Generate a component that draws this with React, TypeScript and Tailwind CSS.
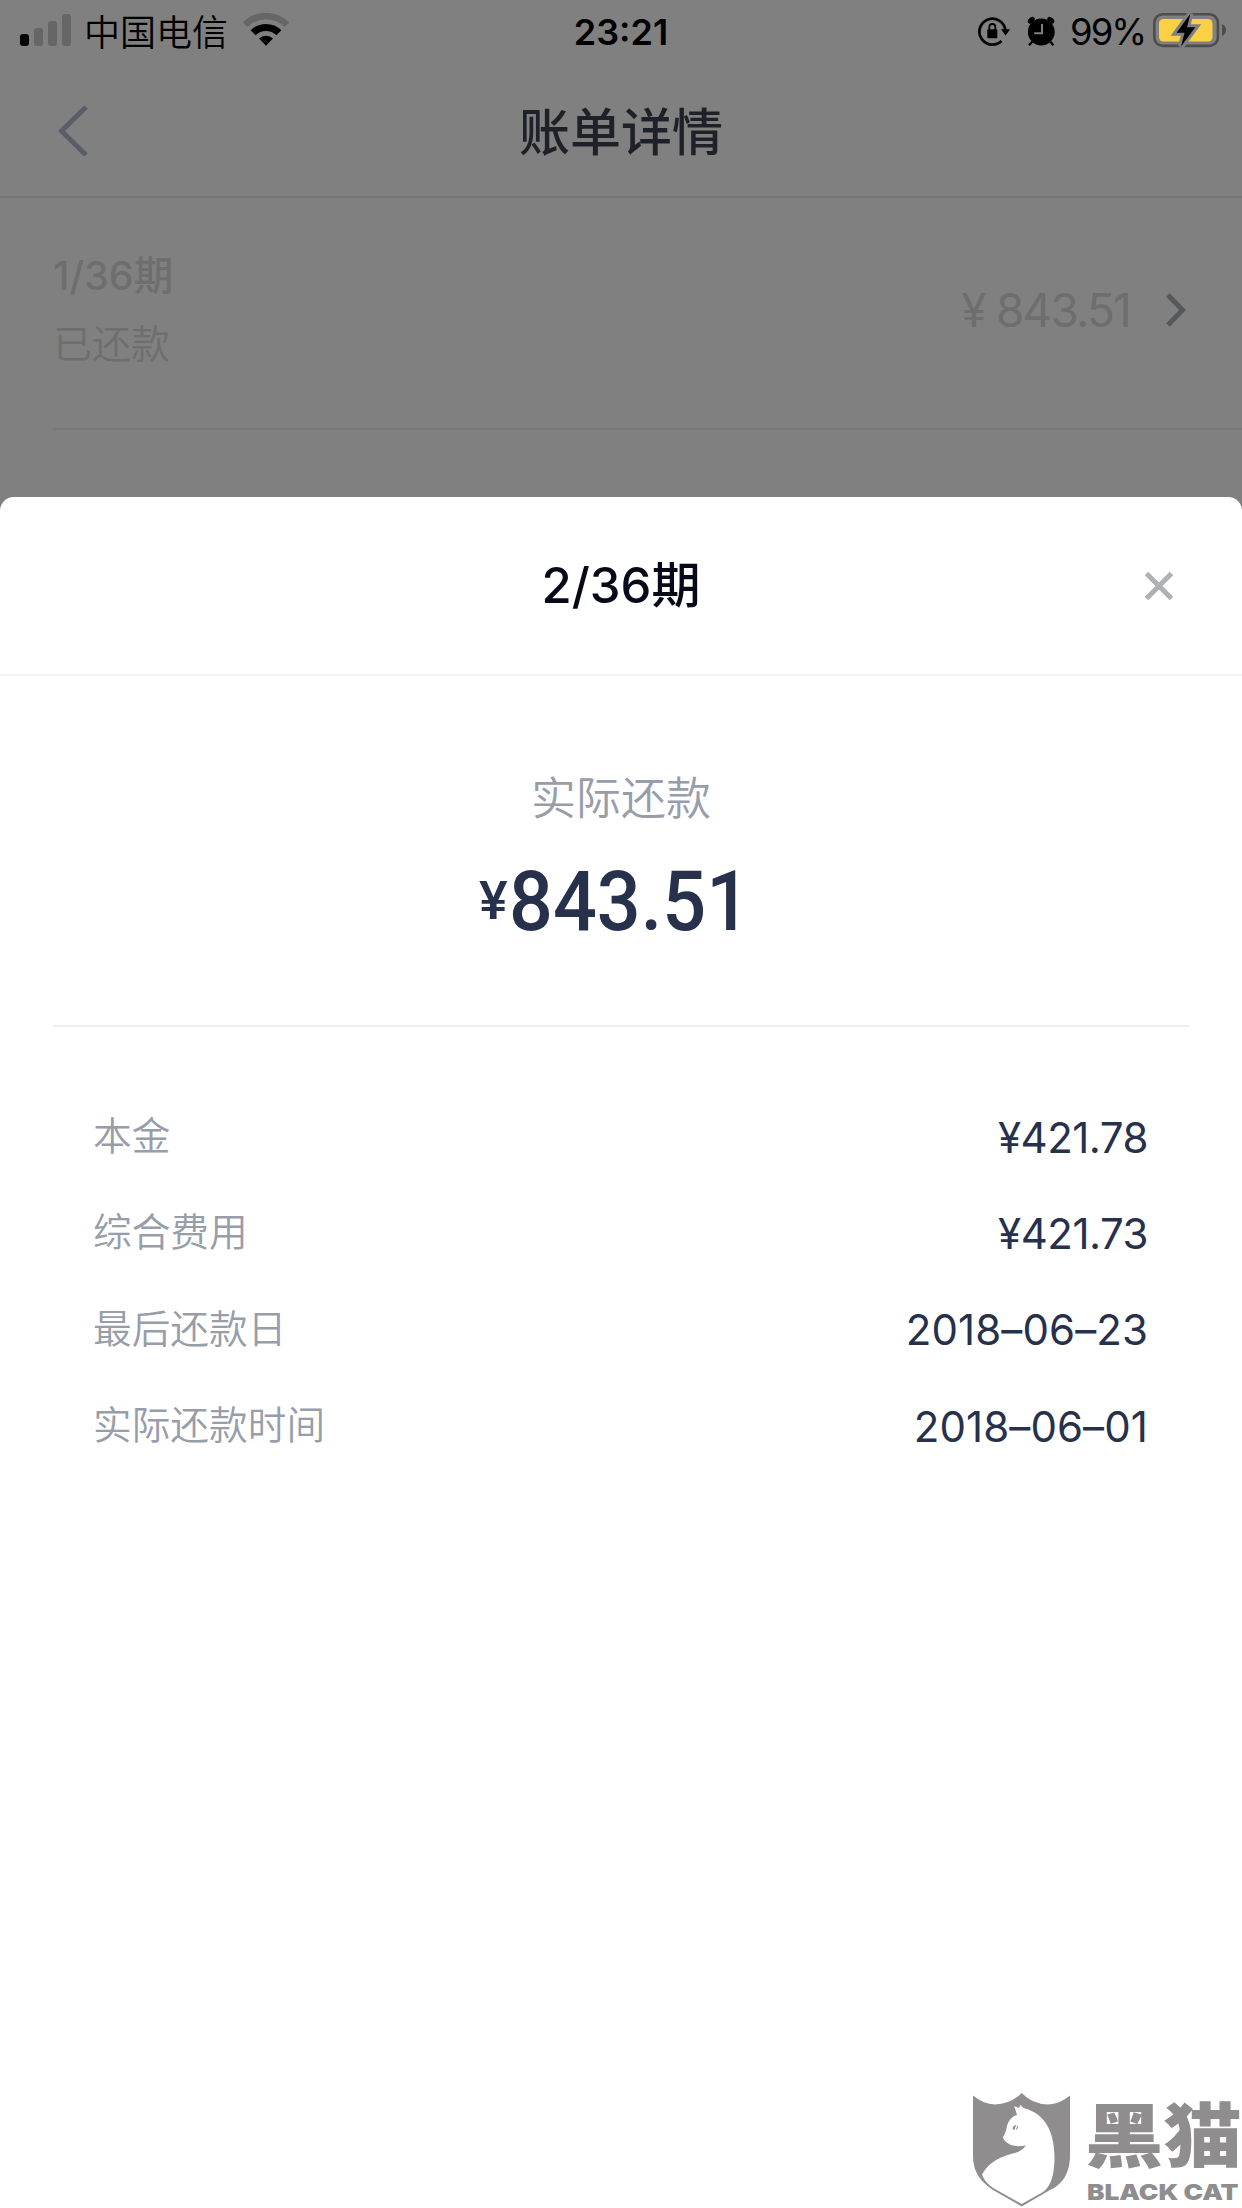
import React from "react";

const details = [
  { label: "本金", value: "¥421.78", tracking: "tracking-[-0.5px]" },
  { label: "综合费用", value: "¥421.73", tracking: "tracking-[-0.5px]" },
  { label: "最后还款日", value: "2018–06–23", tracking: "tracking-[0.1px]" },
  { label: "实际还款时间", value: "2018–06–01", tracking: "tracking-[0.1px]" },
];

function StatusBar() {
  return (
    <div className="h-[60px] flex items-center justify-between text-black relative">
      <div className="flex items-center pl-5">
        <svg width="52" height="32" viewBox="0 0 52 32" className="shrink-0">
          <rect x="0" y="20" width="9" height="12" rx="3" fill="#000" />
          <rect x="14" y="14" width="9" height="18" rx="3" fill="#666" />
          <rect x="28" y="7" width="9" height="25" rx="3" fill="#666" />
          <rect x="42" y="0" width="9" height="32" rx="3" fill="#666" />
        </svg>
        <span className="ml-3 pt-1.5 text-[36px] leading-[60px] font-[350]">中国电信</span>
        <svg width="46" height="34" viewBox="0 0 46 34" className="ml-[15px] shrink-0">
          <path d="M2.1 11.8 A29.5 29.5 0 0 1 43.9 11.8" fill="none" stroke="#666" strokeWidth="6.5" />
          <path d="M10.1 19.8 A18.2 18.2 0 0 1 35.9 19.8" fill="none" stroke="#000" strokeWidth="7" />
          <path d="M16 25.6 A10 10 0 0 1 30 25.6 L23 32.7 Z" fill="#000" />
        </svg>
      </div>
      <div className="absolute inset-x-0 pt-[3px] text-center text-[36px] font-semibold leading-[60px]">
        23:21
      </div>
      <div className="flex items-center pr-[15px]">
        <svg width="34" height="32" viewBox="0 0 34 32" className="mt-1">
          <path d="M24.5 25 A13 13 0 1 1 28.3 14" fill="none" stroke="#000" strokeWidth="2.8" />
          <path d="M24 13.3 H33.2 L28.5 19.5 Z" fill="#000" />
          <rect x="10.3" y="13.3" width="10" height="9" rx="1" fill="#000" />
          <path d="M12.3 14 V11 A3 3 0 0 1 18.3 11 V14" fill="none" stroke="#000" strokeWidth="1.8" />
        </svg>
        <svg width="28" height="31" viewBox="0 0 28 31" className="ml-4 mt-0.5">
          <circle cx="14.3" cy="16" r="13.4" fill="#000" />
          <ellipse cx="4.2" cy="4.2" rx="4" ry="2.6" transform="rotate(-42 4.2 4.2)" fill="#000" />
          <ellipse cx="23.8" cy="4.2" rx="4" ry="2.6" transform="rotate(42 23.8 4.2)" fill="#000" />
          <path d="M5.5 25.5 L2 29.3 M23 25.5 L26.5 29.3" stroke="#000" strokeWidth="2.4" />
          <path d="M15 8 V17.3 H7.3" stroke="#808080" strokeWidth="2" fill="none" />
        </svg>
        <span className="ml-[15px] w-[75px] pt-[3px] text-[36.5px] leading-[60px] tracking-[-2px] whitespace-nowrap">
          99%
        </span>
        <svg width="74" height="36" viewBox="0 0 74 36" className="ml-2">
          <rect x="1.3" y="2.3" width="63.6" height="31.6" rx="8.5" fill="none" stroke="#4d4d4d" strokeWidth="2.6" />
          <rect x="6" y="7" width="53.5" height="22.5" rx="4.5" fill="#fbd045" />
          <path d="M69 12 Q73 14 73 18 Q73 22 69 24 Z" fill="#4d4d4d" />
          <path
            d="M37.5 1.5 L23.5 20.8 H31.5 L28 34.5 L42.3 15.2 H34 Z"
            fill="#000"
            stroke="#808080"
            strokeWidth="6"
            paintOrder="stroke"
          />
        </svg>
      </div>
    </div>
  );
}

function Watermark() {
  return (
    <div className="absolute left-[973px] bottom-0 h-[115px] flex text-[#8f8d8e]">
      <svg width="98" height="114" viewBox="0 0 98 114" className="shrink-0">
        <path
          d="M0 2.5 Q10 11 22 11.5 Q38 11 48.7 0 Q59 11 75 11.5 Q87 11 97 2.5 V62 C97 82 88 92 77 97 L48.7 113.5 L20 97 C9 89 0 81 0 62 Z"
          fill="#8f8d8e"
        />
        <path
          d="M44 22 L41.3 13 L46 15 L47.5 12 L50.5 15 C74 21 81.5 42 81.5 64 C81.5 84 77 94 70 99 L48.7 111 L22 96 C15 92 11 87 9 81.5 C20 63 37 62 45 59 Q50 57 53 52.5 Q44 54 38 52 C34 50 30 47 30 44 C34 38 33 34 35.5 29 Q39 23 44 22 Z"
          fill="#fff"
        />
        <path d="M39.5 36 Q40 32 43 32 L41.5 37 Z M43 37 L44.5 32 Q46 36 43 37 Z" fill="#8f8d8e" />
      </svg>
      <div className="ml-[14px] w-[155px] pt-1.5 flex flex-col">
        <span className="origin-left scale-x-[1.12] text-[70px] leading-[76px] font-black whitespace-nowrap">黑猫</span>
        <span className="ml-0.5 mt-1 origin-left scale-x-[1.19] text-[22px] leading-[26px] font-black whitespace-nowrap">
          BLACK CAT
        </span>
      </div>
    </div>
  );
}

export default function App() {
  return (
    <div className="relative w-[1242px] h-[2208px] overflow-hidden bg-[#808080] font-['Inter','Noto_Sans_CJK_SC',sans-serif]">
      <StatusBar />

      {/* Page header */}
      <header className="h-[138px] relative flex items-center border-b-2 border-[#757575] px-[58px] pt-1.5">
        <svg width="30" height="50" viewBox="0 0 30 50">
          <path d="M28 1 L3.5 25 L28 49" fill="none" stroke="#595d68" strokeWidth="5" />
        </svg>
        <h1 className="absolute inset-x-0 pt-1 text-center text-[51px] font-medium text-[#1f2129]">账单详情</h1>
      </header>

      {/* Instalment behind the sheet */}
      <section className="h-[232px] ml-[53px] pr-[56px] pb-[6px] flex items-center justify-between border-b-2 border-[#797979] text-[#6e6e6e]">
        <div>
          <p className="text-[39.5px] leading-[68px] font-medium">1/36期</p>
          <p className="text-[39px] leading-[68px] font-[350]">已还款</p>
        </div>
        <div className="flex items-center">
          <span className="text-[46px] tracking-[-1.8px]">¥ 843.51</span>
          <svg width="20" height="34" viewBox="0 0 20 34" className="ml-[36px]">
            <path d="M2 2 L16.5 17 L2 32" fill="none" stroke="#56585b" strokeWidth="5" />
          </svg>
        </div>
      </section>

      {/* Bottom sheet */}
      <section className="mt-[67px] h-[1711px] rounded-t-[14px] bg-white">
        <div className="h-[179px] relative flex items-center justify-end pr-[68px] border-b-2 border-[#f3f3f4]">
          <h2 className="absolute inset-x-0 text-center text-[49px] font-medium text-[#060a18]">2/36期</h2>
          <svg width="30" height="30" viewBox="0 0 30 30">
            <path d="M2.5 2.5 L27.5 27.5 M27.5 2.5 L2.5 27.5" stroke="#afb1b5" strokeWidth="5" />
          </svg>
        </div>

        <div className="mx-[53px] h-[351px] pt-[88px] border-b-2 border-[#ececed]">
          <p className="text-center text-[45px] leading-[70px] font-[350] text-[#979da9]">实际还款</p>
          <p className="mt-[20px] pl-[426px] flex items-start text-[#27314b] font-['Roboto',sans-serif] font-medium">
            <span className="w-[30px] text-[54px] leading-[94px]">¥</span>
            <span className="origin-left scale-x-[0.92] text-[84px] leading-[96px]">843.51</span>
          </p>
        </div>

        <div className="pt-[62px] pl-[93px] pr-[94px]">
          {details.map((item) => (
            <div key={item.label} className="h-[96.3px] flex items-center justify-between">
              <span className="pb-[2px] text-[38.7px] font-[350] text-[#979da9]">{item.label}</span>
              <span className={`whitespace-nowrap text-[42px] text-[#27314b] ${item.tracking}`}>{item.value}</span>
            </div>
          ))}
        </div>
      </section>
      <Watermark />
    </div>
  );
}
